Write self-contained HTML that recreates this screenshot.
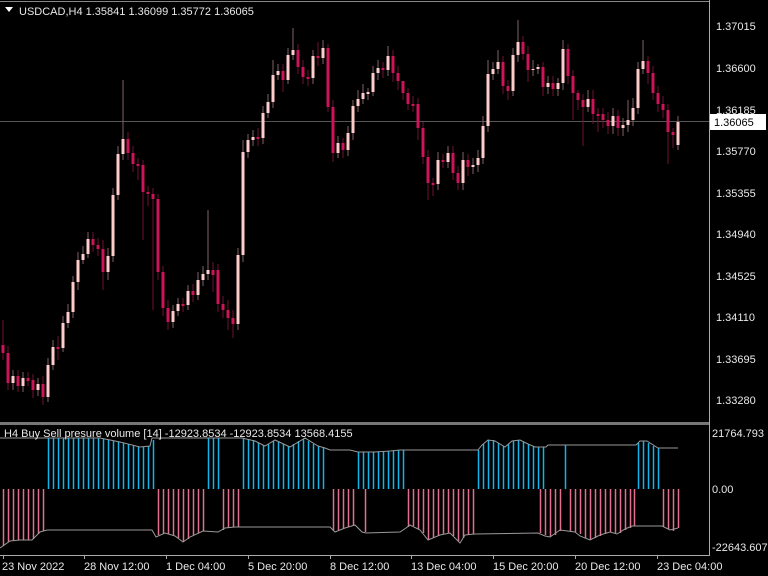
<!DOCTYPE html>
<html><head><meta charset="utf-8"><style>
html,body{margin:0;padding:0;background:#000;width:768px;height:576px;overflow:hidden}
svg{display:block}
text{font-family:"Liberation Sans","DejaVu Sans",sans-serif;font-size:11px;fill:#e8e8e8}
</style></head><body>
<svg width="768" height="576" xmlns="http://www.w3.org/2000/svg">
<rect width="768" height="576" fill="#000"/>
<line x1="0" y1="121.5" x2="709" y2="121.5" stroke="#555" stroke-width="1"/>
<!-- wicks -->
<path fill="none" stroke="#806464" stroke-width="1" d="M13 370V390M23 372V392M38 378V396M48 358V402M53 340V370M63 316V352M68 304V328M73 276V318M78 252V290M83 246V264M88 232V258M108 248V280M113 188V262M118 146V200M123 80V160M173 305V328M178 298V316M188 285V310M198 272V300M203 266V286M208 210V280M238 248V330M243 140V262M248 134V158M253 130V146M263 106V144M268 94V118M273 60V108M278 64V80M288 48V84M293 28V60M313 50V84M323 40V64M338 136V158M348 126V156M353 100V140M358 90V112M363 84V104M368 88V100M373 66V96M378 60V80M388 46V76M438 152V190M448 146V168M463 152V190M473 158V174M478 150V172M483 116V164M488 60V132M493 62V80M498 50V74M513 48V96M518 20V62M533 60V76M538 64V74M548 76V94M558 78V96M563 40V90M588 90V112M613 108V134M623 118V136M628 100V132M633 98V126M638 62V114M643 40V74M678 116V150"/>
<path fill="none" stroke="#6e1232" stroke-width="1" d="M3 320V360M8 346V390M18 370V392M28 372V386M33 374V398M43 376V405M58 336V360M93 232V252M98 238V256M103 240V290M128 132V160M133 146V172M138 158V180M143 160V240M148 186V206M153 188V310M158 194V280M163 266V316M168 300V330M183 298V312M193 284V302M213 262V292M218 264V312M223 296V318M228 300V330M233 310V338M258 128V146M283 64V92M298 44V74M303 60V84M308 70V86M318 42V66M328 44V112M333 100V162M343 138V158M383 62V78M393 50V82M398 66V90M403 84V100M408 88V110M413 96V112M418 98V140M423 122V164M428 150V200M433 178V196M443 154V168M453 146V180M458 166V190M468 154V176M503 56V94M508 80V100M523 36V60M528 46V82M543 62V96M553 76V96M568 44V84M573 70V120M578 90V110M583 94V146M593 90V124M598 108V132M603 108V128M608 112V134M618 110V136M648 56V84M653 66V100M658 86V112M663 96V118M668 104V164M673 128V148"/>
<!-- bull bodies -->
<path fill="#ffcccc" d="M11.5 376h3V383h-3zM21.5 378h3V386h-3zM36.5 384h3V390h-3zM46.5 365h3V397h-3zM51.5 347h3V365h-3zM61.5 323h3V348h-3zM66.5 312h3V323h-3zM71.5 282h3V312h-3zM76.5 260h3V282h-3zM81.5 254h3V260h-3zM86.5 239h3V254h-3zM106.5 256h3V272h-3zM111.5 195h3V256h-3zM116.5 154h3V195h-3zM121.5 139h3V154h-3zM171.5 311h3V322h-3zM176.5 304h3V311h-3zM186.5 291h3V305h-3zM196.5 280h3V295h-3zM201.5 274h3V280h-3zM206.5 270h3V274h-3zM236.5 255h3V324h-3zM241.5 152h3V255h-3zM246.5 140h3V152h-3zM251.5 137h3V140h-3zM261.5 113h3V138h-3zM266.5 102h3V113h-3zM271.5 75h3V102h-3zM276.5 71h3V75h-3zM286.5 55h3V80h-3zM291.5 50h3V55h-3zM311.5 56h3V78h-3zM321.5 48h3V58h-3zM336.5 143h3V153h-3zM346.5 133h3V150h-3zM351.5 106h3V133h-3zM356.5 99h3V106h-3zM361.5 93h3V99h-3zM366.5 92h3V94h-3zM371.5 73h3V92h-3zM376.5 68h3V73h-3zM386.5 56h3V70h-3zM436.5 160h3V184h-3zM446.5 153h3V162h-3zM461.5 160h3V183h-3zM471.5 165h3V167h-3zM476.5 158h3V165h-3zM481.5 126h3V158h-3zM486.5 74h3V126h-3zM491.5 69h3V74h-3zM496.5 62h3V69h-3zM511.5 55h3V91h-3zM516.5 42h3V55h-3zM531.5 69h3V70h-3zM536.5 67h3V69h-3zM546.5 83h3V87h-3zM556.5 83h3V89h-3zM561.5 49h3V83h-3zM586.5 99h3V107h-3zM611.5 116h3V126h-3zM621.5 125h3V128h-3zM626.5 120h3V125h-3zM631.5 108h3V120h-3zM636.5 69h3V108h-3zM641.5 61h3V69h-3zM676.5 122h3V145h-3z"/>
<!-- bear bodies -->
<path fill="#cc1458" d="M1.5 345h3V353h-3zM6.5 353h3V383h-3zM16.5 376h3V386h-3zM26.5 378h3V381h-3zM31.5 380h3V390h-3zM41.5 384h3V397h-3zM56.5 347h3V349h-3zM91.5 239h3V245h-3zM96.5 245h3V249h-3zM101.5 249h3V272h-3zM126.5 139h3V153h-3zM131.5 153h3V164h-3zM136.5 164h3V166h-3zM141.5 165h3V192h-3zM146.5 192h3V194h-3zM151.5 194h3V199h-3zM156.5 199h3V272h-3zM161.5 272h3V308h-3zM166.5 308h3V322h-3zM181.5 304h3V306h-3zM191.5 291h3V295h-3zM211.5 270h3V275h-3zM216.5 270h3V304h-3zM221.5 304h3V310h-3zM226.5 310h3V318h-3zM231.5 318h3V324h-3zM256.5 137h3V139h-3zM281.5 71h3V80h-3zM296.5 50h3V67h-3zM301.5 67h3V77h-3zM306.5 77h3V79h-3zM316.5 56h3V58h-3zM326.5 48h3V107h-3zM331.5 107h3V153h-3zM341.5 143h3V150h-3zM381.5 68h3V70h-3zM391.5 56h3V73h-3zM396.5 73h3V81h-3zM401.5 81h3V93h-3zM406.5 93h3V104h-3zM411.5 104h3V106h-3zM416.5 104h3V128h-3zM421.5 128h3V157h-3zM426.5 157h3V183h-3zM431.5 183h3V185h-3zM441.5 160h3V162h-3zM451.5 153h3V173h-3zM456.5 173h3V183h-3zM466.5 160h3V167h-3zM501.5 62h3V86h-3zM506.5 86h3V91h-3zM521.5 42h3V54h-3zM526.5 54h3V70h-3zM541.5 67h3V87h-3zM551.5 83h3V89h-3zM566.5 49h3V76h-3zM571.5 76h3V93h-3zM576.5 93h3V100h-3zM581.5 100h3V107h-3zM591.5 99h3V114h-3zM596.5 114h3V116h-3zM601.5 114h3V120h-3zM606.5 120h3V126h-3zM616.5 116h3V128h-3zM646.5 61h3V73h-3zM651.5 73h3V93h-3zM656.5 93h3V104h-3zM661.5 104h3V110h-3zM666.5 110h3V132h-3zM671.5 132h3V135h-3z"/>
<line x1="0" y1="1.5" x2="709" y2="1.5" stroke="#888"/>
<line x1="709.5" y1="0" x2="709.5" y2="556" stroke="#aaa"/>
<rect x="0" y="422" width="709" height="3" fill="#777"/>
<line x1="0" y1="555.5" x2="709" y2="555.5" stroke="#aaa"/>
<!-- indicator -->
<path fill="none" stroke="#12b4ec" stroke-width="1.5" d="M48.5 489V438M53.5 489V438M58.5 489V438M63.5 489V438M68.5 489V438M73.5 489V438M78.5 489V438M83.5 489V438M88.5 489V438M93.5 489V438M98.5 489V438M103.5 489V439M108.5 489V440M113.5 489V441M118.5 489V442M123.5 489V443M128.5 489V444M133.5 489V445M138.5 489V447M143.5 489V447M148.5 489V446M153.5 489V440M208.5 489V438M213.5 489V438M218.5 489V438M243.5 489V438M248.5 489V439M253.5 489V440M258.5 489V443M263.5 489V445M268.5 489V444M273.5 489V441M278.5 489V442M283.5 489V444M288.5 489V446M293.5 489V444M298.5 489V441M303.5 489V439M308.5 489V441M313.5 489V444M318.5 489V446M323.5 489V447M358.5 489V452M363.5 489V452M368.5 489V452M373.5 489V452M378.5 489V452M383.5 489V452M388.5 489V451M393.5 489V451M398.5 489V450M403.5 489V450M478.5 489V450M483.5 489V444M488.5 489V440M493.5 489V440M498.5 489V443M503.5 489V446M508.5 489V444M513.5 489V441M518.5 489V440M523.5 489V442M528.5 489V444M533.5 489V446M538.5 489V447M543.5 489V447M565.5 489V445M638.5 489V443M643.5 489V441M648.5 489V443M653.5 489V446M658.5 489V448"/>
<path fill="none" stroke="#e0708e" stroke-width="1.5" d="M3.5 489V546M8.5 489V542M13.5 489V541M18.5 489V540M23.5 489V540M28.5 489V540M33.5 489V539M38.5 489V534M43.5 489V531M158.5 489V535M163.5 489V534M168.5 489V534M173.5 489V535M178.5 489V538M183.5 489V542M188.5 489V539M193.5 489V535M198.5 489V533M203.5 489V531M223.5 489V530M228.5 489V528M233.5 489V527M238.5 489V527M333.5 489V531M338.5 489V530M343.5 489V529M348.5 489V527M353.5 489V526M365.5 489V532M408.5 489V527M413.5 489V526M418.5 489V529M423.5 489V533M428.5 489V540M433.5 489V538M438.5 489V536M443.5 489V534M448.5 489V533M453.5 489V536M458.5 489V541M463.5 489V538M468.5 489V535M473.5 489V534M540.5 489V533M545.5 489V535M550.5 489V537M555.5 489V535M560.5 489V531M570.5 489V531M575.5 489V532M580.5 489V534M585.5 489V538M590.5 489V540M595.5 489V538M600.5 489V536M605.5 489V534M610.5 489V532M615.5 489V533M620.5 489V533M625.5 489V530M630.5 489V528M634.5 489V526M663.5 489V527M668.5 489V529M673.5 489V531M678.5 489V528"/>
<polyline fill="none" stroke="#999" points="0,438 100,438 120,442 140,447 150,446 152,438 242,438 255,441 265,446 275,440 290,447 305,438 318,446 325,448 330,450 350,450 358,452 375,452 390,451 400,450 478,450 482,445 488,440 495,441 505,447 512,441 520,440 528,444 535,447 546,447 548,445 636,445 640,441 647,441 658,448 678,448"/>
<polyline fill="none" stroke="#999" points="0,548 10,541 20,540 32,540 40,532 47,530 152,530 156,537 165,533 175,536 183,542 190,537 203,531 218,532 225,528 235,527 330,527 335,532 345,528 355,525 362,532 366,533 400,532 406,528 410,525 420,530 428,540 440,535 450,533 460,543 465,535 474,534 538,533 545,536 550,537 560,530 575,532 580,536 590,540 600,535 610,532 617,534 625,529 632,526 662,526 670,530 678,528"/>
<polygon points="5,7 13,7 9,12" fill="#fff"/>
<text x="19" y="15">USDCAD,H4  1.35841 1.36099 1.35772 1.36065</text>
<text x="716" y="30">1.37015</text>
<text x="716" y="72">1.36600</text>
<text x="716" y="114">1.36185</text>
<text x="716" y="155">1.35770</text>
<text x="716" y="197">1.35355</text>
<text x="716" y="238">1.34940</text>
<text x="716" y="280">1.34525</text>
<text x="716" y="321">1.34110</text>
<text x="716" y="363">1.33695</text>
<text x="716" y="404">1.33280</text>
<rect x="710" y="114" width="56" height="16" fill="#fff"/>
<text x="714" y="126" style="fill:#000">1.36065</text>
<text x="4" y="437">H4 Buy Sell presure volume [14] -12923.8534 -12923.8534 13568.4155</text>
<text x="712" y="437">21764.793</text>
<text x="712" y="493">0.00</text>
<text x="712" y="551">-22643.607</text>
<path stroke="#aaa" d="M3.5 555v4M84.5 555v4M166.5 555v4M248.5 555v4M330.5 555v4M411.5 555v4M493.5 555v4M575.5 555v4M657.5 555v4"/>
<text x="2" y="570">23 Nov 2022</text>
<text x="84" y="570">28 Nov 12:00</text>
<text x="166" y="570">1 Dec 04:00</text>
<text x="248" y="570">5 Dec 20:00</text>
<text x="330" y="570">8 Dec 12:00</text>
<text x="411" y="570">13 Dec 04:00</text>
<text x="493" y="570">15 Dec 20:00</text>
<text x="575" y="570">20 Dec 12:00</text>
<text x="657" y="570">23 Dec 04:00</text>
</svg>
</body></html>
